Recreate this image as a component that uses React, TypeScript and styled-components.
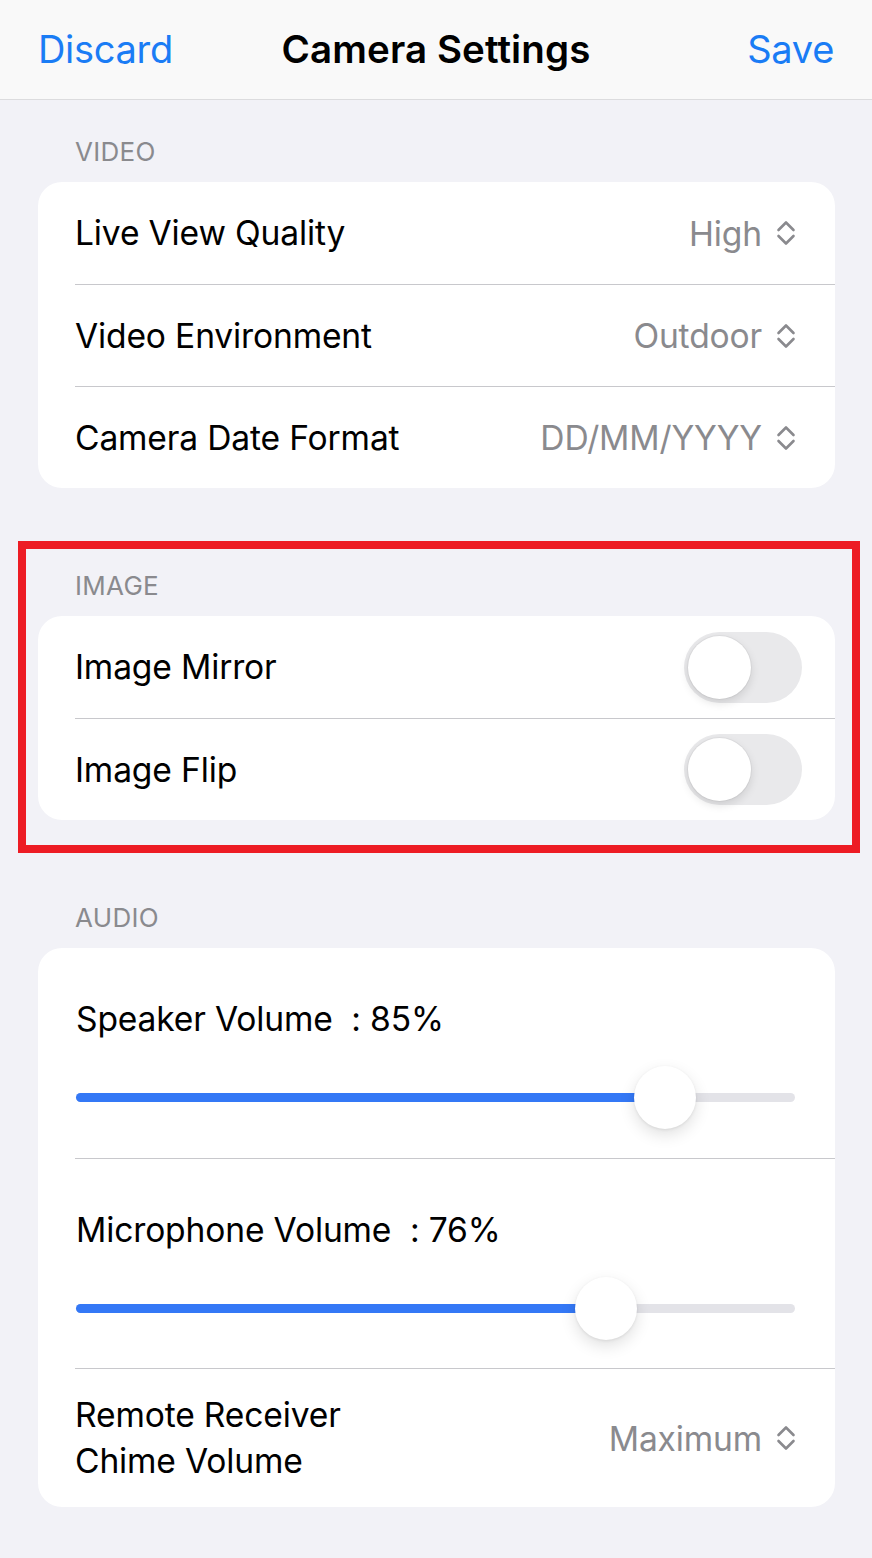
import React from "react";
import styled, { createGlobalStyle } from "styled-components";

const GlobalStyle = createGlobalStyle`
  html, body {
    margin: 0;
    padding: 0;
    background: #f2f2f7;
  }
  body {
    font-family: Inter, "Noto Sans", "Liberation Sans", sans-serif;
    -webkit-font-smoothing: antialiased;
  }
  * { box-sizing: border-box; }
`;

const Chevrons = () => (
  <ChevronIcon viewBox="0 0 20 26" aria-hidden>
    <path d="M2.5 10 L10 2.5 L17.5 10" />
    <path d="M2.5 16 L10 23.5 L17.5 16" />
  </ChevronIcon>
);

type SliderProps = { value: number };

const VolumeSlider = ({ value }: SliderProps) => {
  // track is 718 wide, thumb 62 wide
  const usable = 718 - 62;
  const left = Math.round((value / 100) * usable);
  return (
    <SliderWrap>
      <Track />
      <Fill style={{ width: left + 31 }} />
      <Thumb style={{ left }} />
    </SliderWrap>
  );
};

const App = () => {
  return (
    <>
      <GlobalStyle />
      <Page>
        <NavBar>
          <NavButton>Discard</NavButton>
          <NavTitle>Camera Settings</NavTitle>
          <NavButton $right>Save</NavButton>
        </NavBar>

        <Section $first>
          <SectionLabel>VIDEO</SectionLabel>
          <Card>
            <Row>
              <RowLabel>Live View Quality</RowLabel>
              <Picker>
                <PickerValue>High</PickerValue>
                <Chevrons />
              </Picker>
            </Row>
            <Row>
              <RowLabel>Video Environment</RowLabel>
              <Picker>
                <PickerValue>Outdoor</PickerValue>
                <Chevrons />
              </Picker>
            </Row>
            <Row>
              <RowLabel>Camera Date Format</RowLabel>
              <Picker>
                <PickerValue>DD/MM/YYYY</PickerValue>
                <Chevrons />
              </Picker>
            </Row>
          </Card>
        </Section>

        <Section $highlight>
          <SectionLabel>IMAGE</SectionLabel>
          <Card>
            <Row $toggle>
              <RowLabel>Image Mirror</RowLabel>
              <Toggle>
                <Knob />
              </Toggle>
            </Row>
            <Row $toggle>
              <RowLabel>Image Flip</RowLabel>
              <Toggle>
                <Knob />
              </Toggle>
            </Row>
          </Card>
        </Section>

        <Section>
          <SectionLabel>AUDIO</SectionLabel>
          <Card>
            <SliderRow>
              <RowLabel>Speaker Volume&nbsp;&nbsp;: 85%</RowLabel>
              <VolumeSlider value={85} />
            </SliderRow>
            <SliderRow>
              <RowLabel>Microphone Volume&nbsp;&nbsp;: 76%</RowLabel>
              <VolumeSlider value={76} />
            </SliderRow>
            <Row $tall>
              <RowLabel $twoLine>
                Remote Receiver
                <br />
                Chime Volume
              </RowLabel>
              <Picker>
                <PickerValue>Maximum</PickerValue>
                <Chevrons />
              </Picker>
            </Row>
          </Card>
        </Section>
      </Page>
    </>
  );
};

export default App;

const Page = styled.div`
  width: 872px;
  min-height: 1558px;
  background: #f2f2f7;
  padding-bottom: 50px;
`;

const NavBar = styled.div`
  height: 100px;
  background: #f9f9f9;
  border-bottom: 1px solid #dcdcde;
  display: grid;
  grid-template-columns: 1fr auto 1fr;
  align-items: center;
  padding: 0 38px 2px 38px;
`;

const NavButton = styled.div<{ $right?: boolean }>`
  font-size: 38px;
  color: #1a7cf5;
  letter-spacing: -0.3px;
  justify-self: ${(p) => (p.$right ? "end" : "start")};
`;

const NavTitle = styled.div`
  font-size: 38.5px;
  font-weight: 600;
  color: #000;
  letter-spacing: 0.1px;
`;

const Section = styled.div<{ $first?: boolean; $highlight?: boolean }>`
  position: relative;
  margin: ${(p) => (p.$first ? "20px" : "66px")} 37px 0 38px;

  ${(p) =>
    p.$highlight &&
    `
    &::after {
      content: "";
      position: absolute;
      left: -20px;
      right: -25px;
      top: -13px;
      bottom: -33px;
      border: 8px solid #ed1c24;
      pointer-events: none;
    }
  `}
`;

const SectionLabel = styled.div`
  height: 62px;
  display: flex;
  align-items: center;
  padding-left: 37px;
  font-size: 26px;
  color: #8a8a8e;
  letter-spacing: 0.3px;
`;

const Card = styled.div`
  background: #fff;
  border-radius: 24px;
  padding-left: 37px;
  overflow: hidden;
`;

const Row = styled.div<{ $toggle?: boolean; $tall?: boolean }>`
  height: ${(p) => (p.$tall ? "139px" : "102px")};
  display: flex;
  align-items: center;
  justify-content: space-between;
  padding-left: 0;
  padding-right: ${(p) => (p.$toggle ? "33px" : "39px")};

  & + & {
    border-top: 1px solid #c8c8cc;
  }
`;

const SliderRow = styled.div`
  height: 210px;
  padding: 51px 40px 0 1px;

  & + & {
    border-top: 1px solid #c8c8cc;
  }

  & + ${Row} {
    border-top: 1px solid #c8c8cc;
  }
`;

const RowLabel = styled.div<{ $twoLine?: boolean }>`
  font-size: 33.6px;
  line-height: ${(p) => (p.$twoLine ? "46px" : "40px")};
  color: #000;
  letter-spacing: -0.15px;
  white-space: nowrap;
`;

const Picker = styled.div`
  display: flex;
  align-items: center;
  gap: 14px;
`;

const PickerValue = styled.span`
  font-size: 33.6px;
  color: #8a8a8e;
  letter-spacing: -0.15px;
`;

const ChevronIcon = styled.svg`
  width: 20px;
  height: 26px;
  fill: none;
  stroke: #8a8a8e;
  stroke-width: 2.6;
  stroke-linecap: round;
  stroke-linejoin: round;
`;

const Toggle = styled.div`
  width: 118px;
  height: 71px;
  border-radius: 36px;
  background: #e9e9eb;
  padding: 4px;
  display: flex;
  align-items: center;
`;

const Knob = styled.div`
  width: 63px;
  height: 63px;
  border-radius: 50%;
  background: #fff;
  box-shadow: 0 4px 10px rgba(0, 0, 0, 0.12), 0 0 0 1px rgba(0, 0, 0, 0.04);
`;

const SliderWrap = styled.div`
  position: relative;
  margin-top: 27px;
  height: 63px;
`;

const Track = styled.div`
  position: absolute;
  left: 0;
  right: 0;
  top: 27px;
  height: 9px;
  border-radius: 5px;
  background: #e3e3e8;
`;

const Fill = styled.div`
  position: absolute;
  left: 0;
  top: 27px;
  height: 9px;
  border-radius: 5px;
  background: #3478f6;
`;

const Thumb = styled.div`
  position: absolute;
  top: 0;
  width: 62px;
  height: 63px;
  border-radius: 50%;
  background: #fff;
  box-shadow: 0 6px 16px rgba(0, 0, 0, 0.12), 0 1px 3px rgba(0, 0, 0, 0.08);
`;
